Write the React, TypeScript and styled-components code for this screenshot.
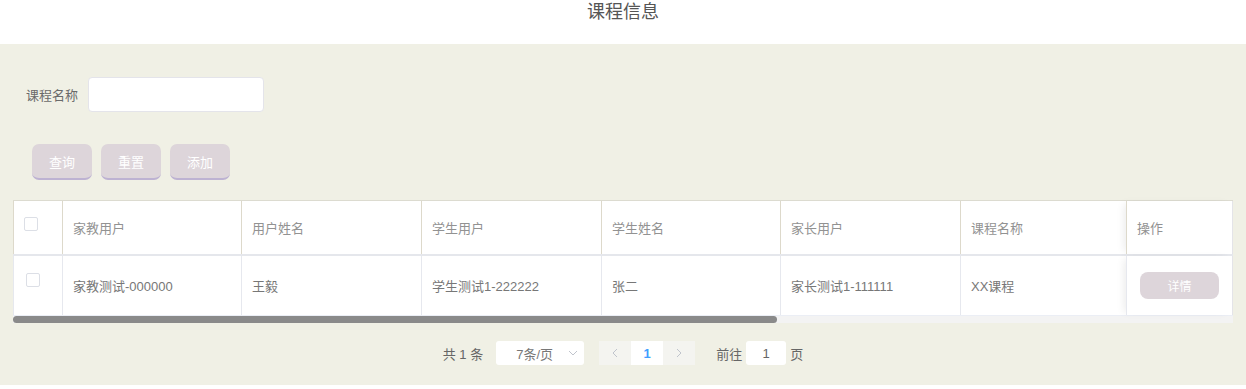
import React from "react";
import styled, { createGlobalStyle } from "styled-components";

const Global = createGlobalStyle`
  html, body { margin: 0; padding: 0; background: #fff; }
  body { font-family: "Liberation Sans", "Noto Sans CJK SC", sans-serif; }
  * { box-sizing: border-box; }
`;

const Page = styled.div`
  width: 1246px;
`;

const TitleBar = styled.div`
  height: 44px;
  display: flex;
  justify-content: center;
  padding-top: 1px;
  font-size: 18px;
  color: #555;
  line-height: 22px;
`;

const Panel = styled.div`
  background: #f0f0e5;
  padding: 33px 13px 20px 13px;
  display: flex;
  flex-direction: column;
`;

const FormRow = styled.div`
  display: flex;
  align-items: center;
  gap: 10px;
  padding-left: 13px;
`;

const Label = styled.label`
  font-size: 13px;
  color: #6a6a6a;
  width: 52px;
`;

const TextInput = styled.input`
  width: 176px;
  height: 35px;
  border: 1px solid #e4e4ea;
  border-radius: 4px;
  background: #fff;
  outline: none;
`;

const ButtonRow = styled.div`
  display: flex;
  gap: 9px;
  margin-top: 32px;
  padding-left: 19px;
`;

const ActionButton = styled.button<{ $w?: number; $h?: number; $r?: number; $fs?: number }>`
  width: ${(p) => p.$w ?? 60}px;
  height: ${(p) => p.$h ?? 36}px;
  border: none;
  border-bottom: ${(p) => (p.$h ? "none" : "2px solid #bdb2d2")};
  border-radius: ${(p) => p.$r ?? 7}px;
  background: #ddd5da;
  color: #fff;
  font-size: ${(p) => p.$fs ?? 13}px;
  font-family: inherit;
  padding: 0;
`;

const TableWrap = styled.div`
  margin-top: 20px;
  width: 1220px;
  position: relative;
  background: #fff;
`;

const Row = styled.div<{ $head?: boolean }>`
  display: grid;
  grid-template-columns: 49px 179px 180px 180px 179px 180px 166px 107px;
  height: ${(p) => (p.$head ? 56 : 60)}px;
  border-bottom: ${(p) => (p.$head ? "2px solid #e5e7ec" : "1px solid #ebeef5")};
  border-top: ${(p) => (p.$head ? "1px solid #dcdbd0" : "none")};
`;

const Cell = styled.div<{ $head?: boolean; $fixed?: boolean; $center?: boolean }>`
  display: flex;
  align-items: center;
  justify-content: ${(p) => (p.$center ? "center" : "flex-start")};
  padding-left: ${(p) => (p.$center ? 0 : 10)}px;
  font-size: 13px;
  color: ${(p) => (p.$head ? "#929292" : "#777")};
  border-left: 1px solid ${(p) => (p.$head ? "#ddd9cb" : "#e6e8ee")};
  background: #fff;
  ${(p) => (p.$fixed ? "box-shadow: -5px 0 8px -3px rgba(0,0,0,0.08); border-right: 1px solid #e4e4e8;" : "")}
`;

const CheckCell = styled(Cell)`
  align-items: flex-start;
  padding-top: ${(p) => (p.$head ? 16 : 17)}px;
  padding-left: ${(p) => (p.$head ? 10 : 12)}px;
`;

const Checkbox = styled.span`
  display: inline-block;
  width: 14px;
  height: 14px;
  border: 1px solid #dcdfe6;
  border-radius: 2px;
  background: #fff;
`;

const ScrollTrack = styled.div`
  height: 7px;
  background: #f3f3f3;
  display: flex;
`;

const ScrollThumb = styled.div`
  height: 7px;
  background: #8a8a8a;
  border-radius: 4px;
`;

const Pager = styled.div`
  display: flex;
  align-items: center;
  justify-content: center;
  margin-top: 18px;
  height: 24px;
  font-size: 13px;
  color: #666;
`;

const Total = styled.span`
  margin-right: 13px;
`;

const SizeSelect = styled.div`
  width: 88px;
  height: 24px;
  background: #fff;
  border-radius: 3px;
  display: flex;
  align-items: center;
  justify-content: space-between;
  padding: 0 6px 0 20px;
  color: #777;
  font-size: 13px;
  margin-right: 15px;
`;

const PageBtn = styled.div<{ $active?: boolean }>`
  width: 32px;
  height: 24px;
  display: flex;
  align-items: center;
  justify-content: center;
  background: ${(p) => (p.$active ? "#fff" : "#f4f4f0")};
  color: ${(p) => (p.$active ? "#409eff" : "#c0c4cc")};
  font-weight: ${(p) => (p.$active ? 700 : 400)};
  font-size: 13px;
`;

const Jumper = styled.div`
  display: flex;
  align-items: center;
  gap: 4px;
  margin-left: 21px;
`;

const JumpInput = styled.div`
  width: 40px;
  height: 24px;
  background: #fff;
  border-radius: 3px;
  display: flex;
  align-items: center;
  justify-content: center;
  color: #666;
`;

const headers = ["家教用户", "用户姓名", "学生用户", "学生姓名", "家长用户", "课程名称"];
const values = ["家教测试-000000", "王毅", "学生测试1-222222", "张二", "家长测试1-111111", "XX课程"];

const Chevron = ({ dir }: { dir: "left" | "right" | "down" }) => {
  const d = dir === "left" ? "M6 1 L2 5 L6 9" : dir === "right" ? "M2 1 L6 5 L2 9" : "M1 3 L5 7 L9 3";
  return (
    <svg width={dir === "down" ? 10 : 8} height={10} viewBox={dir === "down" ? "0 0 10 10" : "0 0 8 10"}>
      <path d={d} fill="none" stroke="#c0c4cc" strokeWidth="1" />
    </svg>
  );
};

export default function App() {
  return (
    <Page>
      <Global />
      <TitleBar>课程信息</TitleBar>
      <Panel>
        <FormRow>
          <Label>课程名称</Label>
          <TextInput />
        </FormRow>
        <ButtonRow>
          <ActionButton>查询</ActionButton>
          <ActionButton>重置</ActionButton>
          <ActionButton>添加</ActionButton>
        </ButtonRow>
        <TableWrap>
          <Row $head>
            <CheckCell $head>
              <Checkbox />
            </CheckCell>
            {headers.map((h) => (
              <Cell $head key={h}>
                {h}
              </Cell>
            ))}
            <Cell $head $fixed>
              操作
            </Cell>
          </Row>
          <Row>
            <CheckCell>
              <Checkbox />
            </CheckCell>
            {values.map((v) => (
              <Cell key={v}>{v}</Cell>
            ))}
            <Cell $fixed $center>
              <ActionButton $w={79} $h={27} $r={8} $fs={12}>
                详情
              </ActionButton>
            </Cell>
          </Row>
          <ScrollTrack>
            <ScrollThumb style={{ width: 764 }} />
          </ScrollTrack>
        </TableWrap>
        <Pager>
          <Total>共 1 条</Total>
          <SizeSelect>
            <span>7条/页</span>
            <Chevron dir="down" />
          </SizeSelect>
          <PageBtn>
            <Chevron dir="left" />
          </PageBtn>
          <PageBtn $active>1</PageBtn>
          <PageBtn>
            <Chevron dir="right" />
          </PageBtn>
          <Jumper>
            <span>前往</span>
            <JumpInput>1</JumpInput>
            <span>页</span>
          </Jumper>
        </Pager>
      </Panel>
    </Page>
  );
}
